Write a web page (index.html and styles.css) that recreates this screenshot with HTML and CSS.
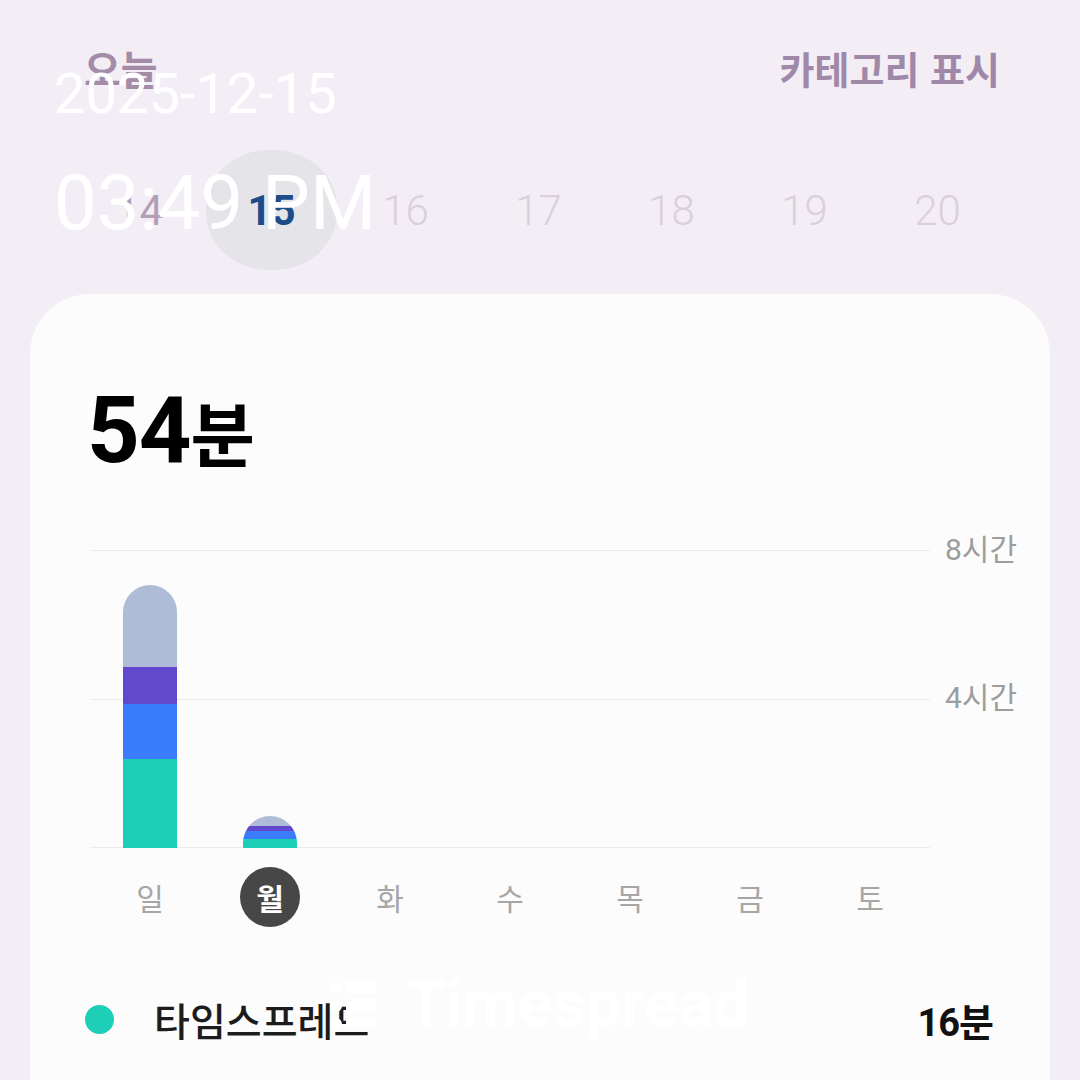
FILE: index.html
```html
<!DOCTYPE html>
<html lang="ko">
<head>
<meta charset="utf-8">
<title>Timespread</title>
<link rel="stylesheet" href="styles.css">
</head>
<body>
<div class="screen">
  <header class="top">
    <span class="today">오늘</span>
    <span class="cat">카테고리 표시</span>
  </header>

  <div class="dates">
    <div class="date past">14</div>
    <div class="date sel">15</div>
    <div class="date">16</div>
    <div class="date">17</div>
    <div class="date">18</div>
    <div class="date">19</div>
    <div class="date">20</div>
  </div>

  <section class="card">
    <h1 class="total">54<span class="unit">분</span></h1>

    <div class="chart">
      <div class="plot">
        <div class="grid">
          <div class="gl"></div>
          <div class="gl"></div>
        </div>
        <div class="bars">
          <div class="col">
            <div class="bar" style="height:263px">
              <div class="seg s-gray" style="height:82px"></div>
              <div class="seg s-purple" style="height:37px"></div>
              <div class="seg s-blue" style="height:55px"></div>
              <div class="seg s-teal" style="height:89px"></div>
            </div>
          </div>
          <div class="col">
            <div class="bar" style="height:32px">
              <div class="seg s-gray" style="height:10px"></div>
              <div class="seg s-purple" style="height:5px"></div>
              <div class="seg s-blue" style="height:8px"></div>
              <div class="seg s-teal" style="height:9px"></div>
            </div>
          </div>
          <div class="col"></div>
          <div class="col"></div>
          <div class="col"></div>
          <div class="col"></div>
          <div class="col"></div>
        </div>
      </div>
      <div class="axis">
        <div class="tick">8시간</div>
        <div class="tick">4시간</div>
      </div>
    </div>

    <div class="days">
      <div class="day">일</div>
      <div class="day on"><span class="dot-day">월</span></div>
      <div class="day">화</div>
      <div class="day">수</div>
      <div class="day">목</div>
      <div class="day">금</div>
      <div class="day">토</div>
    </div>

    <div class="legend">
      <span class="ldot"></span>
      <span class="lname">타임스프레드</span>
      <span class="lval">16분</span>
    </div>

    <div class="wm">
      <svg class="wm-icon" width="50" height="52" viewBox="0 0 50 52">
        <circle cx="6" cy="8" r="6" fill="#fff"/>
        <rect x="16" y="2" width="30" height="12" rx="3" fill="#fff"/>
        <circle cx="6" cy="27" r="6" fill="#fff"/>
        <rect x="16" y="20" width="30" height="14" rx="3" fill="#fff"/>
        <circle cx="6" cy="45" r="6" fill="#fff"/>
        <rect x="16" y="39" width="30" height="10" rx="3" fill="#fff"/>
      </svg>
      <span class="wm-text">Timespread</span>
    </div>
  </section>

  <div class="stamp">
    <div class="stamp-date">2025-12-15</div>
    <div class="stamp-time">03:49 PM</div>
  </div>
</div>
</body>
</html>
```

FILE: styles.css
```css
* { box-sizing: border-box; }
html, body { margin: 0; padding: 0; }
body {
  background: #f3eef5;
  font-family: Roboto, "Noto Sans CJK KR", sans-serif;
  width: 1080px;
  height: 1080px;
  overflow: hidden;
}
.screen {
  position: relative;
  width: 1080px;
  height: 1080px;
  display: flex;
  flex-direction: column;
}

/* header */
.top {
  margin-top: 44px;
  height: 48px;
  padding: 0 80px 0 84px;
  display: flex;
  justify-content: space-between;
  align-items: center;
  font-family: "Noto Sans CJK KR", sans-serif;
  font-weight: 700;
  font-size: 38px;
  line-height: 48px;
}
.today { color: #a48ca9; font-size: 40px; }
.cat { color: #a088a8; }

/* date strip */
.dates {
  margin-top: 58px;
  height: 120px;
  padding-left: 73px;
  display: flex;
}
.date {
  width: 133px;
  height: 120px;
  display: flex;
  align-items: center;
  justify-content: center;
  font-family: Roboto, sans-serif;
  font-weight: 300;
  font-size: 42px;
  color: #dccfdc;
}
.date.past { color: #b29fb5; font-weight: 400; }
.date.sel {
  width: 131px;
  margin-right: 2px;
  background: #e5e4e9;
  border-radius: 48%;
  color: #1d4c88;
  font-weight: 700;
}

/* card */
.card {
  position: relative;
  margin: 24px 30px 0 30px;
  flex: 1;
  background: #fcfcfc;
  border-radius: 60px 60px 0 0;
  padding: 92px 57px 0 57px;
}
.total {
  margin: 0;
  height: 90px;
  font-family: Roboto, "Noto Sans CJK KR", sans-serif;
  font-weight: 700;
  font-size: 92px;
  line-height: 90px;
  color: #000;
  letter-spacing: -1px;
  display: flex;
  align-items: baseline;
}
.unit {
  font-family: "Noto Sans CJK KR", sans-serif;
  font-size: 70px;
  font-weight: 700;
  margin-left: 0;
}

/* chart */
.chart {
  margin-top: 74px;
  margin-left: 3px;
  display: grid;
  grid-template-columns: 840px 1fr;
}
.plot {
  display: grid;
  height: 298px;
}
.grid, .bars { grid-area: 1 / 1; }
.grid {
  display: flex;
  flex-direction: column;
  border-bottom: 1.5px solid #ececec;
}
.gl {
  flex: 1;
  border-top: 1.5px solid #ececec;
}
.bars {
  display: flex;
  align-items: flex-end;
}
.col {
  width: 120px;
  display: flex;
  justify-content: center;
  align-items: flex-end;
}
.bar {
  width: 54px;
  border-radius: 27px 27px 0 0;
  overflow: hidden;
  display: flex;
  flex-direction: column;
}
.seg { width: 100%; flex: none; }
.s-gray { background: #aebcd7; }
.s-purple { background: #6248cc; }
.s-blue { background: #3a7cfd; }
.s-teal { background: #1ecfb7; }

.axis {
  display: flex;
  flex-direction: column;
  padding-left: 15px;
  min-width: 0;
  overflow: visible;
}
.tick {
  height: 148px;
  margin-top: -19px;
  margin-bottom: 19px;
  line-height: 38px;
  white-space: nowrap;
  font-family: Roboto, "Noto Sans CJK KR", sans-serif;
  font-size: 30px;
  color: #9d9d9d;
}

/* days */
.days {
  margin-top: 19px;
  margin-left: 3px;
  width: 840px;
  height: 60px;
  display: flex;
}
.day {
  width: 120px;
  display: flex;
  align-items: center;
  justify-content: center;
  font-family: "Noto Sans CJK KR", sans-serif;
  font-size: 30px;
  color: #a6a6a6;
}
.dot-day {
  width: 60px;
  height: 60px;
  border-radius: 50%;
  background: #474747;
  color: #fff;
  font-weight: 700;
  display: flex;
  align-items: center;
  justify-content: center;
}

/* legend */
.legend {
  margin-top: 62px;
  height: 60px;
  display: flex;
  align-items: center;
}
.ldot {
  width: 29px;
  height: 29px;
  border-radius: 50%;
  background: #1ecfb7;
  margin-left: -2px;
}
.lname {
  margin-left: 40px;
  flex: 1;
  font-family: "Noto Sans CJK KR", sans-serif;
  font-size: 39px;
  font-weight: 500;
  color: #1c1c1c;
}
.lval {
  font-family: Roboto, "Noto Sans CJK KR", sans-serif;
  font-size: 38px;
  font-weight: 700;
  color: #111;
  letter-spacing: -1px;
}

/* watermark overlay */
.wm {
  position: absolute;
  left: 300px;
  top: 676px;
  display: flex;
  align-items: center;
  gap: 26px;
}
.wm-icon { display: block; }
.wm-text {
  font-family: Roboto, sans-serif;
  font-weight: 700;
  font-size: 64px;
  line-height: 70px;
  color: #ffffff;
}

/* timestamp overlay */
.stamp {
  position: absolute;
  left: 54px;
  top: 66px;
  color: #ffffff;
  font-family: Roboto, sans-serif;
  font-weight: 400;
}
.stamp-date {
  font-size: 56px;
  line-height: 56px;
}
.stamp-time {
  margin-top: 43px;
  font-size: 76px;
  line-height: 76px;
}
```
